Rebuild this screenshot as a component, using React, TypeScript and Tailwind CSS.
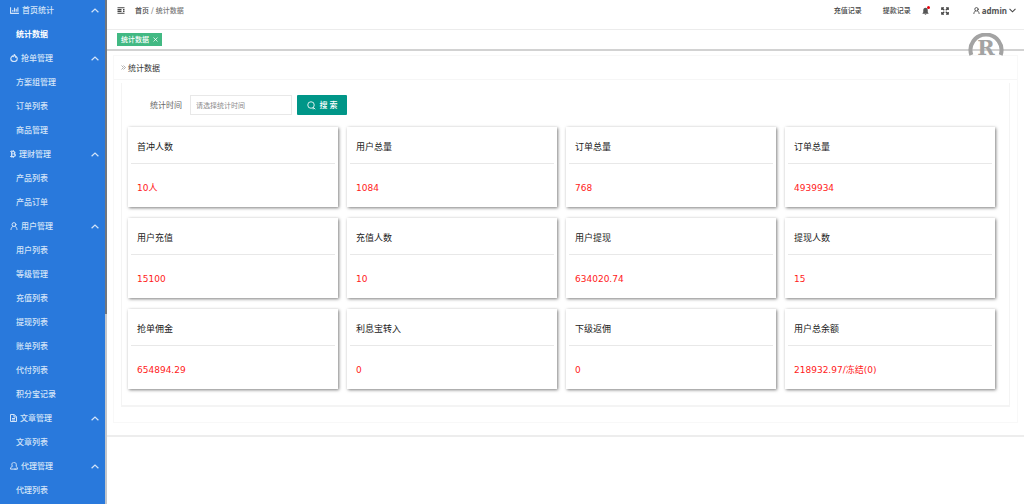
import { useState } from 'react';
import type { ReactNode } from 'react';
import { FaBtc, FaChartBar } from 'react-icons/fa';

type MenuGroup = {
  name: string;
  icon: ReactNode;
  items: string[];
};

function UserIcon({ className }: { className: string }) {
  return (
    <svg className={className} viewBox="0 0 16 16" fill="none" stroke="currentColor" strokeWidth={2} strokeLinecap="round">
      <circle cx="8" cy="5.2" r="3.9" />
      <path d="M2 15c.3-3.4 1.800-5.300 3.800-6.200M14 15c-.3-3.400-1.800-5.300-3.800-6.200" />
    </svg>
  );
}

function FlameIcon() {
  return (
    <svg className="size-2" viewBox="0 0 16 16" fill="none" stroke="currentColor" strokeWidth={2.400} strokeLinejoin="round">
      <path d="M8.500 1c.2 2-.8 3-2 4.200C5.800 4.800 5.500 4.300 5.300 3.600 3 5.200 1.500 7.200 1.500 9.700c0 3.200 2.800 5.400 6.500 5.400s6.500-2.200 6.500-5.400c0-1.800-.7-3.300-1.900-4.500-.3.700-.8 1.200-1.400 1.400C11 4.200 10.200 2.300 8.500 1z" />
    </svg>
  );
}

function FileIcon() {
  return (
    <svg className="h-2 w-[7px]" viewBox="0 0 14 16" fill="none" stroke="currentColor" strokeWidth={2} strokeLinejoin="round">
      <path d="M1 1h7.500L13 5.500V15H1z" />
      <path d="M8 1v5h5M4 9h6M4 12h6" />
    </svg>
  );
}

function AgentIcon() {
  return (
    <svg className="size-2" viewBox="0 0 16 16" fill="none" stroke="currentColor" strokeWidth={2} strokeLinejoin="round">
      <path d="M7 1.200c-2 0-3.300 1.500-3.300 3.600 0 1.600.6 2.800 1.500 3.600C2.500 9.300 1 11 1 14.200h12" />
      <path d="M7.500 1.200h1c2.500 0 4 1.300 4 3.600v4.400c1.400.8 2.500 2 2.500 5H8.500" />
    </svg>
  );
}

function Chevron({ className }: { className: string }) {
  return (
    <svg className={className} viewBox="0 0 16 10" fill="none" stroke="currentColor" strokeWidth={2.400}>
      <path d="M1.200 8.500 8 2l6.800 6.500" />
    </svg>
  );
}

const menu: MenuGroup[] = [
  { name: '首页统计', icon: <FaChartBar className="size-[9px]" />, items: ['统计数据'] },
  { name: '抢单管理', icon: <FlameIcon />, items: ['方案组管理', '订单列表', '商品管理'] },
  { name: '理财管理', icon: <FaBtc className="h-2 w-[6px]" />, items: ['产品列表', '产品订单'] },
  {
    name: '用户管理',
    icon: <UserIcon className="size-2" />,
    items: ['用户列表', '等级管理', '充值列表', '提现列表', '账单列表', '代付列表', '积分宝记录'],
  },
  { name: '文章管理', icon: <FileIcon />, items: ['文章列表'] },
  { name: '代理管理', icon: <AgentIcon />, items: ['代理列表'] },
];

const stats = [
  { label: '首冲人数', value: '10人' },
  { label: '用户总量', value: '1084' },
  { label: '订单总量', value: '768' },
  { label: '订单总量', value: '4939934' },
  { label: '用户充值', value: '15100' },
  { label: '充值人数', value: '10' },
  { label: '用户提现', value: '634020.74' },
  { label: '提现人数', value: '15' },
  { label: '抢单佣金', value: '654894.29' },
  { label: '利息宝转入', value: '0' },
  { label: '下级返佣', value: '0' },
  { label: '用户总余额', value: '218932.97/冻结(0)' },
];

function Sidebar() {
  const [closed, setClosed] = useState<string[]>([]);
  const [current, setCurrent] = useState('统计数据');

  const toggle = (name: string) =>
    setClosed((prev) => (prev.includes(name) ? prev.filter((n) => n !== name) : [...prev, name]));

  return (
    <aside className="flex w-[107px] shrink-0 overflow-hidden bg-[#2979dc] text-[8px] font-medium text-[#d3e4f8]">
      <nav className="-mt-0.5 flex-1">
        {menu.map((group) => (
          <div key={group.name}>
            <button
              onClick={() => toggle(group.name)}
              className="flex h-6 w-full items-center gap-[3px] pr-1.5 pl-2.5"
            >
              {group.icon}
              <span>{group.name}</span>
              <Chevron className={`ml-auto h-[5px] w-2 ${closed.includes(group.name) ? 'rotate-180' : ''}`} />
            </button>
            {!closed.includes(group.name) &&
              group.items.map((item) => (
                <a
                  key={item}
                  href="#"
                  onClick={() => setCurrent(item)}
                  className={`flex h-6 items-center pl-4 ${current === item ? 'font-bold text-white' : ''}`}
                >
                  {item}
                </a>
              ))}
          </div>
        ))}
      </nav>
      {/* Scrollbar */}
      <div className="w-0.5 bg-[#c3c6ca]">
        <div className="h-[314px] bg-[#71767d]" />
      </div>
    </aside>
  );
}

function Header() {
  return (
    <header className="flex h-[30px] items-center border-b border-[#ececec] pr-2 pb-2 pl-2.5 text-[7px] font-medium text-[#444]">
      <button aria-label="收起菜单" className="mr-2.5">
        <svg className="h-[7px] w-2" viewBox="0 0 16 14" fill="none" stroke="currentColor" strokeWidth={2.400}>
          <path d="M1 1.500h14M1 12.500h14M1 5.200h8M1 8.800h8M15 5.200h-3M15 8.800h-3" />
        </svg>
      </button>
      <div className="flex gap-0.5">
        <a href="#">首页</a>
        <span className="text-[#777]">/</span>
        <span className="text-[#777]">统计数据</span>
      </div>

      <div className="ml-auto flex items-center">
        <a href="#" className="mr-[21px]">充值记录</a>
        <a href="#" className="mr-[11px]">提款记录</a>
        <button aria-label="消息" className="relative mr-3">
          <svg className="h-2 w-[7px]" viewBox="0 0 14 16" fill="#555">
            <path d="M7 1.500c-2.800 0-4.500 2-4.500 5v4L1 12.500v.8h12v-.8l-1.500-2v-4c0-3-1.700-5-4.500-5zM5.200 14h3.600c-.2 1-.9 1.600-1.800 1.600S5.400 15 5.200 14z" />
          </svg>
          <span className="absolute -top-px -right-px size-[3px] rounded-full bg-red-600" />
        </button>
        <button aria-label="全屏" className="mr-6">
          <svg className="size-2" viewBox="0 0 16 16" fill="none" stroke="currentColor" strokeWidth={2.400}>
            <path d="M1.500 6V1.500H6M10 1.500h4.500V6M14.500 10v4.500H10M6 14.500H1.500V10M2 2l4.500 4.500M14 2 9.500 6.500M14 14 9.500 9.500M2 14l4.500-4.500" />
          </svg>
        </button>
        <button className="flex items-center gap-0.5">
          <UserIcon className="size-[7px]" />
          <span className="font-['Noto_Sans',sans-serif] text-[8px] leading-[12px] font-bold text-[#555]">admin</span>
          <Chevron className="h-[5px] w-[7px] rotate-180" />
        </button>
      </div>
    </header>
  );
}

export default function App() {
  const [date, setDate] = useState('');

  return (
    <div className="flex min-h-screen bg-white font-['Noto_Sans_CJK_SC',sans-serif]">
      <Sidebar />

      <div className="relative min-w-0 flex-1">
        <Header />

        {/* Open tabs */}
        <div className="flex h-[21px] items-center border-b-2 border-[#d2d2d2] pl-2.5">
          <div className="flex h-[13px] items-center gap-1 bg-[#42b983] px-1 text-[7px] font-medium text-white">
            <span>统计数据</span>
            <button aria-label="关闭">
              <svg className="size-[5px]" viewBox="0 0 10 10" stroke="currentColor" strokeWidth={1.500}>
                <path d="M1 1l8 8M9 1 1 9" />
              </svg>
            </button>
          </div>
        </div>

        <main className="border-b-2 border-[#ededed] px-1.5 pt-1 pb-3">
          <section className="border border-[#f8f8f8]">
            <h1 className="flex h-6 items-center gap-0.5 border-b border-[#f6f6f6] pl-[7px] text-[8px] text-[#333]">
              <svg className="size-[5px] text-[#888]" viewBox="0 0 10 10" fill="none" stroke="currentColor" strokeWidth={1.300}>
                <path d="M1 1l4 4-4 4M5 1l4 4-4 4" />
              </svg>
              统计数据
            </h1>

            <div className="mx-[7px] mt-[3px] mb-[15px] border-r border-b-2 border-l border-[#f4f4f4] pt-3 pr-3.5 pb-4 pl-1.5">
              <form className="flex h-5 items-center pl-[22px]" onSubmit={(e) => e.preventDefault()}>
                <label htmlFor="date" className="mr-2 text-[8px] text-[#666]">
                  统计时间
                </label>
                <input
                  id="date"
                  value={date}
                  onChange={(e) => setDate(e.target.value)}
                  placeholder="请选择统计时间"
                  className="mr-[5px] h-5 w-[102px] border border-[#e8e8e8] px-[5px] text-[7px] text-[#333] outline-none placeholder:text-[#8c8c8c]"
                />
                <button className="flex h-5 w-[50px] items-center justify-center gap-1 rounded-[1px] bg-[#009688] text-[8px] font-medium text-white">
                  <svg className="size-[9px]" viewBox="0 0 18 18" fill="none" stroke="currentColor" strokeWidth={1.700}>
                    <circle cx="8" cy="8" r="6.500" />
                    <path d="M11 15.500c2.500 1 3-.5 2-2.500M13.500 13.500l3 3" />
                  </svg>
                  搜 索
                </button>
              </form>

              {/* Stat cards */}
              <div className="mt-3 grid grid-cols-4 gap-x-[9px] gap-y-[11px]">
                {stats.map((stat, i) => (
                  <div key={i} className="h-20 bg-white px-[3px] shadow-[1px_1px_3px_rgba(0,0,0,0.5)]">
                    <h2 className="flex h-[37px] items-center border-b border-[#e8e8e8] px-1.5 pt-1 text-[9px] text-[#222]">
                      {stat.label}
                    </h2>
                    <p className="px-1.5 pt-4 font-['DejaVu_Sans','Noto_Sans_CJK_SC',sans-serif] text-[9px] leading-4 text-[#ff1a1a]">
                      {stat.value}
                    </p>
                  </div>
                ))}
              </div>
            </div>
          </section>
        </main>

        {/* Trademark badge */}
        <svg className="absolute top-[33px] right-5 h-7 w-9" viewBox="0 0 36 28">
          <path d="M3.300 22A15.500 15.500 0 1 1 32.700 22" fill="none" stroke="#a3a3a3" strokeWidth={4} />
          <text x="18" y="22" textAnchor="middle" fontFamily="DejaVu Serif, serif" fontSize={21} fontWeight={700} fill="#a3a3a3">
            R
          </text>
        </svg>
      </div>
    </div>
  );
}
